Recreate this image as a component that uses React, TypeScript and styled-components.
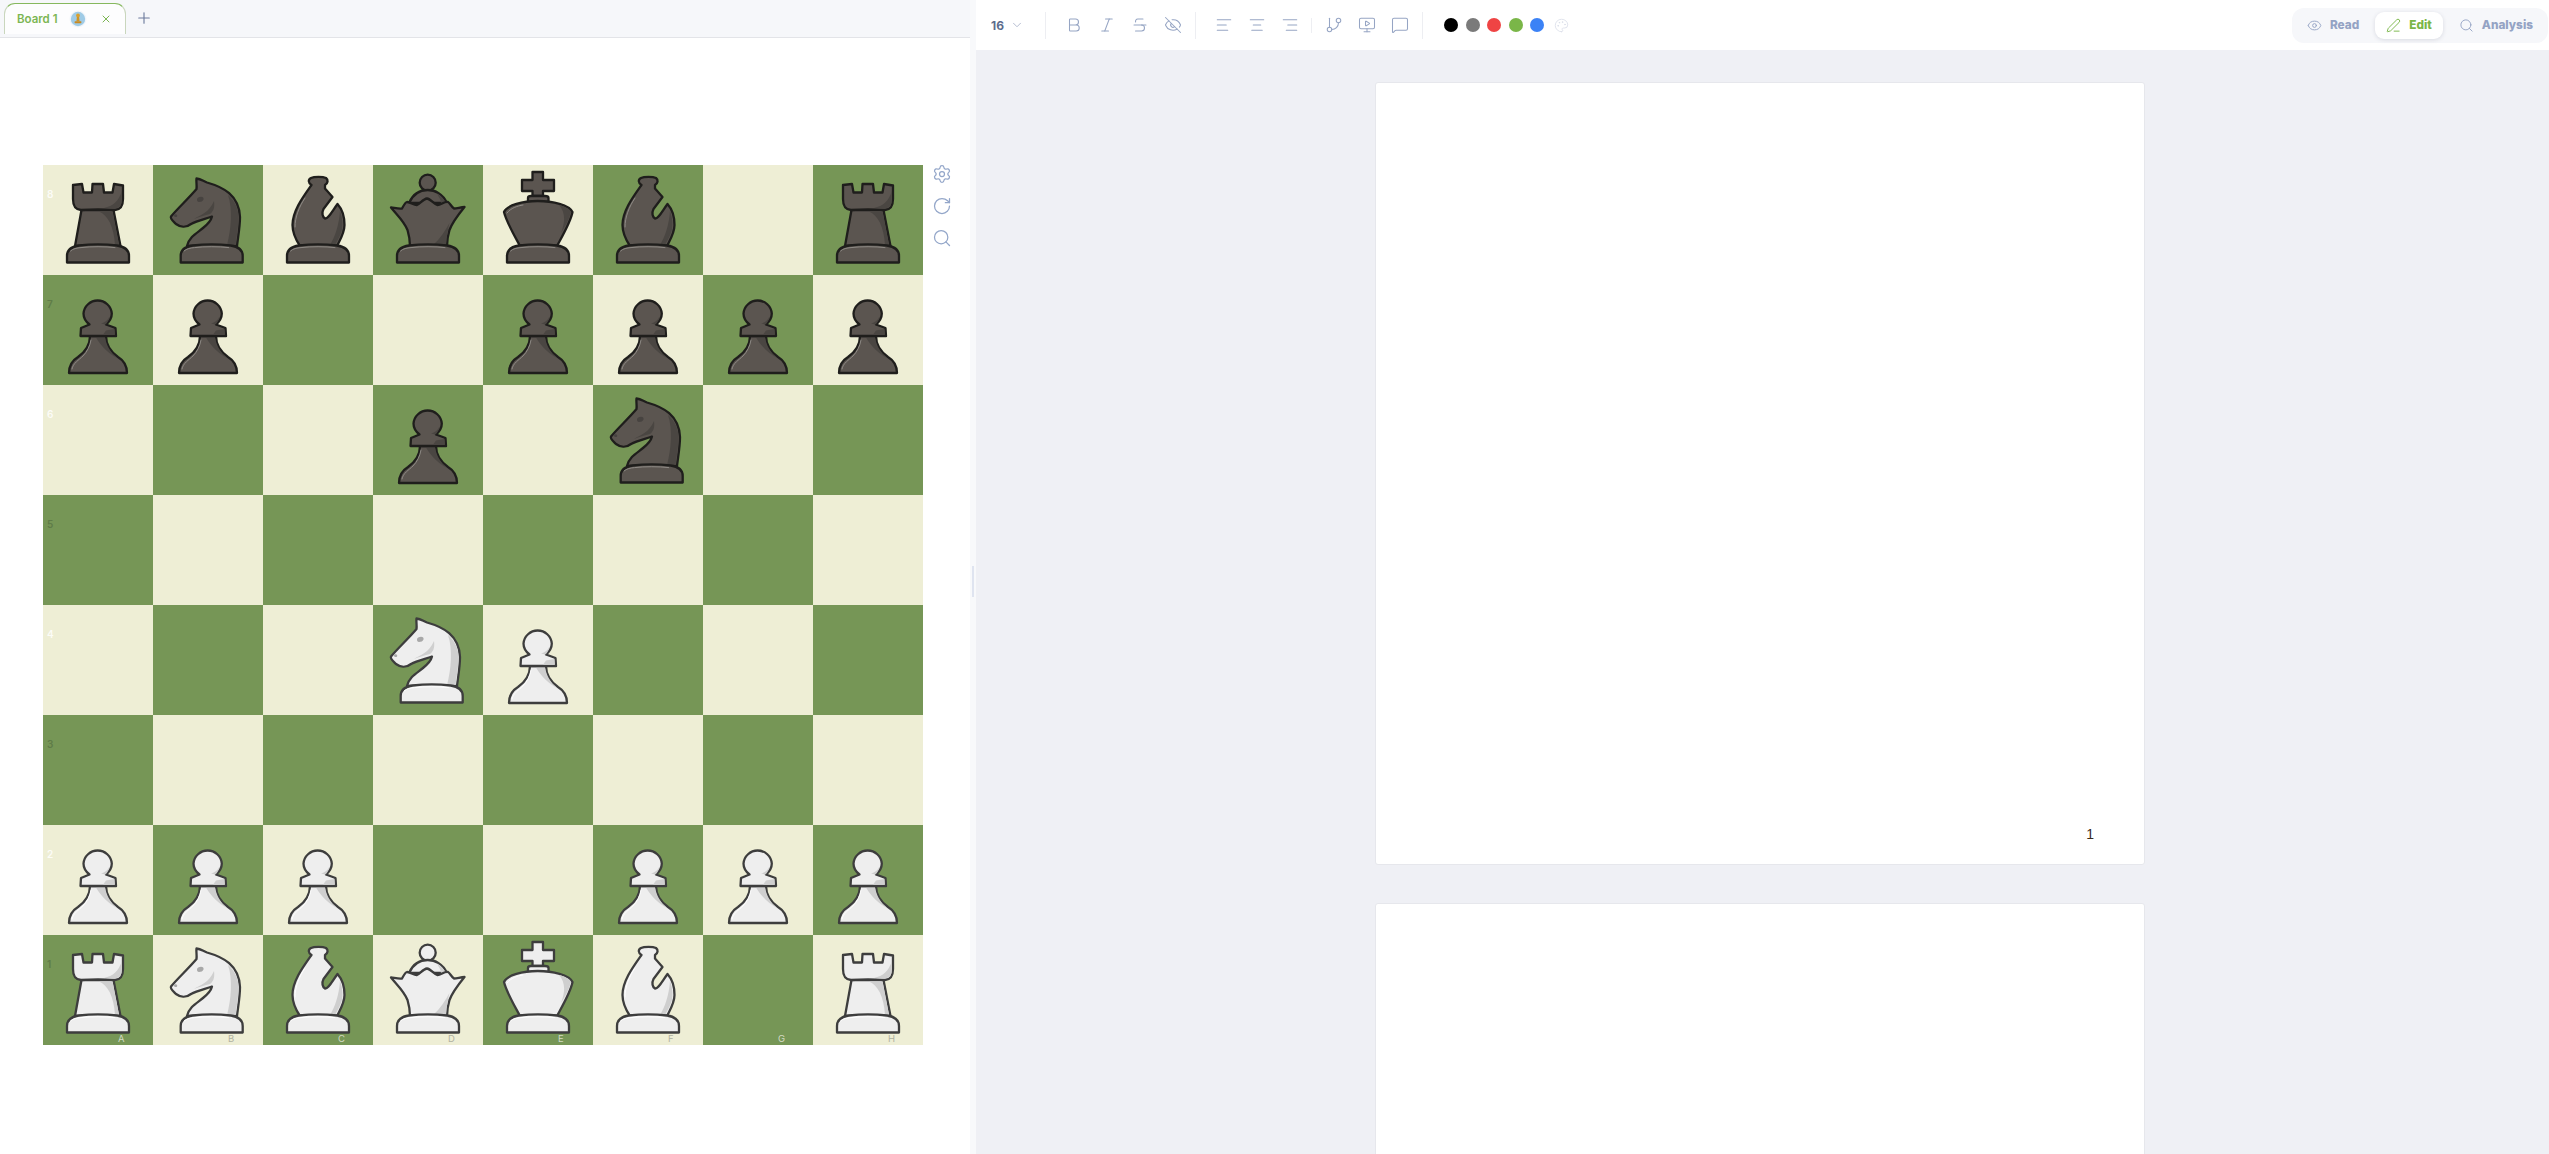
import React, { FC } from 'react'
import styled, { createGlobalStyle } from 'styled-components'
import {
  AlignCenter,
  AlignLeft,
  AlignRight,
  Bold,
  ChevronDown,
  Eye,
  EyeOff,
  GitBranch,
  Italic,
  MessageSquare,
  MonitorPlay,
  Palette,
  PenLine,
  Plus,
  RotateCw,
  Search,
  Settings,
  Strikethrough,
  X,
} from 'lucide-react'

const GlobalStyle = createGlobalStyle`
  html, body {
    margin: 0;
    padding: 0;
    height: 100%;
    overflow: hidden;
    background: #fff;
    font-family: Inter, "Liberation Sans", sans-serif;
  }
`

const Shell = styled.div`
  display: flex;
  width: 2549px;
  height: 1154px;
  overflow: hidden;
`

const LeftPane = styled.div`
  width: 970px;
  flex: none;
  display: flex;
  flex-direction: column;
  background: #fff;
`

const TabBar = styled.div`
  display: flex;
  align-items: flex-start;
  height: 38px;
  box-sizing: border-box;
  padding: 3px 0 0 4px;
  background: #f6f7fa;
  border-bottom: 1px solid #e3e4e8;
`

const Tab = styled.div`
  display: flex;
  align-items: center;
  width: 122px;
  height: 31px;
  box-sizing: border-box;
  padding: 0 0 0 12px;
  background: #fdfdfe;
  border: 1px solid #c9d6bd;
  border-top: 1px solid #86b85e;
  border-bottom: none;
  border-radius: 11px 11px 0 0;
`

const TabTitle = styled.span`
  font-size: 11.5px;
  font-weight: 600;
  color: #7cb653;
  width: 52px;
  flex: none;
`

const TabClose = styled(X)`
  margin-left: 13px;
  color: #7cb653;
`

const AddTab = styled.div`
  display: flex;
  align-items: center;
  justify-content: center;
  width: 20px;
  height: 20px;
  margin: 5px 0 0 8px;
  color: #6c7a9c;
`

const BoardRow = styled.div`
  display: flex;
  align-items: flex-start;
  padding: 127px 0 0 43px;
`

const Board = styled.div`
  display: grid;
  grid-template-columns: repeat(8, 110px);
  grid-auto-rows: 110px;
`

const Square = styled.div<{ $dark: boolean }>`
  position: relative;
  background: ${(p) => (p.$dark ? '#769656' : '#eeeed5')};

  svg {
    display: block;
  }
`

const RankLabel = styled.span<{ $dark: boolean }>`
  position: absolute;
  left: 4px;
  top: 22px;
  font-size: 10px;
  font-weight: 600;
  line-height: 14px;
  color: ${(p) => (p.$dark ? '#5f7c48' : 'rgba(255, 255, 255, 0.85)')};
`

const FileLabel = styled.span<{ $dark: boolean }>`
  position: absolute;
  left: 75px;
  top: 98px;
  font-size: 9.5px;
  line-height: 12px;
  color: ${(p) => (p.$dark ? '#d3dac4' : '#b0b1a0')};
`

const BoardTools = styled.div`
  display: flex;
  flex-direction: column;
  gap: 12px;
  margin-top: -1px;
  padding: 0 0 0 9px;
  color: #93a6c9;
`

const Divider = styled.div`
  width: 6px;
  flex: none;
  display: flex;
  align-items: center;
  justify-content: center;
  background: #f8f9fb;
  padding-top: 9px;
  box-sizing: border-box;
`

const DividerHandle = styled.div`
  width: 2px;
  height: 31px;
  background: #dfe4f0;
`

const RightPane = styled.div`
  flex: 1;
  min-width: 0;
  display: flex;
  flex-direction: column;
  background: #eff0f5;
`

const Toolbar = styled.div`
  display: flex;
  align-items: center;
  height: 50px;
  flex: none;
  background: #fff;
  padding-left: 15px;
`

const FontSize = styled.div`
  display: flex;
  align-items: center;
  width: 54px;
  gap: 6px;
  font-size: 12px;
  font-weight: 700;
  color: #5c6b8c;

  svg {
    color: #aab4ca;
  }
`

const Separator = styled.div<{ $short?: boolean; $flush?: boolean }>`
  width: 1px;
  height: ${(p) => (p.$short ? '15px' : '27px')};
  background: #edeef2;
  flex: none;
  margin: ${(p) => (p.$short ? '0 5px' : p.$flush ? '0 11px 0 0' : '0 11px 0 6px')};
`

const ToolButton = styled.div<{ $faint?: boolean; $narrow?: boolean }>`
  display: flex;
  align-items: center;
  justify-content: center;
  width: ${(p) => (p.$narrow ? '20px' : '33px')};
  height: 33px;
  flex: none;
  color: ${(p) => (p.$faint ? '#d8dde8' : '#96a5c4')};
`

const Swatches = styled.div`
  display: flex;
  align-items: center;
  gap: 7.5px;
  margin-left: 10px;
`

const Swatch = styled.div<{ $color: string }>`
  width: 14px;
  height: 14px;
  border-radius: 50%;
  background: ${(p) => p.$color};
`

const Modes = styled.div`
  display: flex;
  align-items: center;
  gap: 5px;
  height: 35px;
  box-sizing: border-box;
  padding: 4px;
  margin-left: auto;
  margin-right: 1px;
  border-radius: 12px;
  background: #f6f7fa;
`

const Mode = styled.div<{ $active?: boolean }>`
  display: flex;
  align-items: center;
  gap: 8px;
  height: 27px;
  padding: 0 11px;
  border-radius: 9px;
  font-size: 11.8px;
  font-weight: 800;
  color: ${(p) => (p.$active ? '#7ab648' : '#94a3c4')};
  background: ${(p) => (p.$active ? '#fff' : 'transparent')};
  box-shadow: ${(p) => (p.$active ? '0 1px 4px rgba(40, 50, 80, 0.14)' : 'none')};
`

const Sheets = styled.div`
  flex: 1;
  min-height: 0;
  overflow: hidden;
  display: flex;
  flex-direction: column;
  align-items: center;
  gap: 38px;
  padding: 32px 5px 0 0;
`

const Sheet = styled.div`
  width: 770px;
  height: 783px;
  flex: none;
  box-sizing: border-box;
  display: flex;
  align-items: flex-end;
  justify-content: flex-end;
  padding: 0 50px 22px 0;
  background: #fff;
  border: 1px solid #e6e7ec;
  border-radius: 3px;
`

const PageNumber = styled.span`
  font-family: 'Liberation Sans', sans-serif;
  font-size: 14px;
  line-height: 16px;
  color: #3a2a1c;
`

type Layer = { d: string; kind: 'fill' | 'shade' | 'light' | 'dot' }

const BASE = 'M24 97.5V91C24 84.5 29 81.5 36 80.5C48 79 62 79 74 80.5C81 81.5 86 84.5 86 91V97.5Z'
const BASE_LIGHT = 'M27.5 86C30 83.5 34 83 38 82.6C48 81.4 62 81.4 72 82.6'
const KNIGHT_BASE =
  'M27.7 97.5V91C27.7 84.5 32.7 81.5 39.7 80.5C51.7 79 65.7 79 77.7 80.5C84.7 81.5 89.7 84.5 89.7 91V97.5Z'
const KNIGHT_BASE_LIGHT = 'M31 86C33.7 83.5 37.7 83 41.7 82.6C51.7 81.4 65.7 81.4 75.7 82.6'

const pieces: Record<string, Layer[]> = {
  r: [
    { kind: 'fill', d: 'M38.5 45L32 81H77.5L70.5 45Z' },
    { kind: 'shade', d: 'M56 46.5C65 50 71 62 72 80H76L69.5 46.5Z' },
    {
      kind: 'fill',
      d: 'M30 20L39 19L40.5 27.5H49L49.5 19H60L61 27.5H69.5L71 19L80 20.5V34C80 41 78 44.5 72 45C60 44 50 44 38 45C32 44.5 30 41 30 34Z',
    },
    { kind: 'shade', d: 'M78.8 26V34C78.8 40 77 43 71 43.7C66 43.5 63 43.2 61 43C70 41 76 36 78.8 26Z' },
    { kind: 'fill', d: BASE },
    { kind: 'light', d: BASE_LIGHT },
  ],
  n: [
    {
      kind: 'fill',
      d: 'M43.5 13.5C48 14 50 16 54 17.5C70 22 86 30 87 52C87 62 85 72 84 81H34C36 72 44 68 50 63C55 59 58 56 59 51.5C52 54 44 55.5 38 59C33 63 27 62 23 59C20 56 17 54 18 51.5C24 44 36 33 43.5 24C44 20 43 16 43.5 13.5Z',
    },
    { kind: 'shade', d: 'M75 30C82 36 85.5 44 85.5 52C85.5 62 83.5 72 82.5 80H74C78 65 80 45 75 30Z' },
    { kind: 'shade', d: 'M61 36C62 43 60 47 57 49C52 50.5 46 51.5 41 54C47 50 56 48 61 36Z' },
    { kind: 'dot', d: 'M44 34.5C44 32.8 46 31.8 48 31.8C50 31.8 51 33 50.5 34.5C50 36.2 48 37 46 37C44.5 37 44 36 44 34.5Z' },
    { kind: 'dot', d: 'M21 50.5C21 49.5 22.5 49 23.5 49.5C24.5 50 24.5 51.5 23.5 52C22.5 52.3 21 51.8 21 50.5Z' },
    { kind: 'fill', d: KNIGHT_BASE },
    { kind: 'light', d: KNIGHT_BASE_LIGHT },
  ],
  b: [
    {
      kind: 'fill',
      d: 'M48.5 20C45 18 45 14.5 48 13C51 11.5 60 11.5 63 13C65.5 15 65 18 62 20V23.5L69.5 32L60.5 44C58.5 48 59.5 52 62 53.5C65 54 68 48 74.5 39C79 44 81.5 52 81.5 60C81.5 68 77 75 74 81H37C33 75 29.5 68 29.5 60C29.5 46 40 32 48.5 20Z',
    },
    { kind: 'shade', d: 'M77 46C80 54 80.3 62 78 68C76 73 74 76.5 72 80H67C72 72 76 60 77 46Z' },
    { kind: 'light', d: 'M32 62C32 52 36 42 42 33' },
    { kind: 'fill', d: BASE },
    { kind: 'light', d: BASE_LIGHT },
  ],
  q: [
    { kind: 'fill', d: 'M46.7 17.7a8 8 0 1 0 16 0a8 8 0 1 0-16 0Z' },
    { kind: 'fill', d: 'M36 38C40 29 47 25 54.7 25C62 25 70 29 74 38Z' },
    { kind: 'shade', d: 'M64 29C68 31 71 34 73 38H68C68 35 66 32 64 29Z' },
    {
      kind: 'fill',
      d: 'M18 42.5C22 43 26 44 29 43.5C31 40 32 37.5 34 37C38 37 41 40.5 44 40C47 39 50 34 54 33.5C58 34 61 39.5 64.5 40C68 40 71 36.5 75 37C77 38 78.5 42 81 43.5C84 43.5 88 42 91.5 42C85 50 79 58 76.5 65C75 70 74 75 74 81H37C37 75 36 70 34.5 65C31 56 24 50 18 42.5Z',
    },
    { kind: 'shade', d: 'M76.5 58C75 64 73.5 72 73 80H60C67 74 72 66 76.5 58Z' },
    { kind: 'fill', d: BASE },
    { kind: 'light', d: BASE_LIGHT },
  ],
  k: [
    { kind: 'fill', d: 'M49.5 7H60V15H71V26H60V31H49.5V26H39V15H49.5Z' },
    { kind: 'fill', d: 'M45 37V33C45 31.5 46 31 48 31H62C64 31 65.5 31.5 65.5 33V37Z' },
    {
      kind: 'fill',
      d: 'M21 47C24 40 40 36 54.7 36C70 36 86 40 89.5 47C88 56 81 68 74 81H37C30 68 23 56 21 47Z',
    },
    { kind: 'shade', d: 'M76 40C82 41.5 87 44 88 47C86 55 82 62 78 68C82 58 83 48 76 40Z' },
    { kind: 'light', d: 'M24 48C28 43 34 41 40 40' },
    { kind: 'fill', d: BASE },
    { kind: 'light', d: BASE_LIGHT },
  ],
  p: [
    {
      kind: 'fill',
      d: 'M47 61C47 70 42 77 35 82C30 85 26 89 26 98H84C84 89 80 85 75 82C68 77 63 70 63 61Z',
    },
    { kind: 'shade', d: 'M53 62.5C58 71 66 79 74 83C68 78 63.5 71 62 62.5Z' },
    { kind: 'light', d: 'M29 94C30 88 36 85 40 81C44 77 47 71 48 65' },
    {
      kind: 'fill',
      d: 'M46.5 49.5C42 46 40.5 42 40.5 38.5A14.2 14.2 0 0 1 68.8 38.5C68.8 42 67 46 63 49.5L72.5 53L73 61H37.5L38 53Z',
    },
    { kind: 'shade', d: 'M58 48.5C62 47.5 65 45 66.5 41.5C66 45 64.5 47.5 62.5 49.5Z' },
    { kind: 'shade', d: 'M63 55.5L71.3 54L71.8 59.8H60Z' },
  ],
}

const palettes = {
  black: { fill: '#5b5550', shade: '#4a4642', light: '#8f8b86', dot: '#474340', line: '#1f1e1c' },
  white: { fill: '#eeeeee', shade: '#cfcfcf', light: '#ffffff', dot: '#a8a8a8', line: '#3d3d3d' },
}

const Piece: FC<{ code: string }> = ({ code }) => {
  const isWhite = code === code.toUpperCase()
  const colors = isWhite ? palettes.white : palettes.black
  return (
    <svg width='110' height='110' viewBox='0 0 110 110'>
      {pieces[code.toLowerCase()].map((layer, i) => {
        if (layer.kind === 'fill') {
          return (
            <path
              key={i}
              d={layer.d}
              fill={colors.fill}
              stroke={colors.line}
              strokeWidth='2.3'
              strokeLinejoin='round'
            />
          )
        }
        if (layer.kind === 'light') {
          return <path key={i} d={layer.d} fill='none' stroke={colors.light} strokeWidth='1' strokeLinecap='round' />
        }
        return <path key={i} d={layer.d} fill={colors[layer.kind]} />
      })}
    </svg>
  )
}

const TabAvatar: FC = () => (
  <svg width='18' height='18' viewBox='0 0 18 18'>
    <circle cx='9' cy='9' r='8.5' fill='#f3f6fa' />
    <circle cx='9' cy='9' r='7.2' fill='#9fcbe6' />
    <circle cx='9' cy='5.4' r='1.9' fill='#d9a02f' />
    <path d='M7.9 7h2.2l.5 4.2h-3.2z' fill='#cf9528' />
    <rect x='5.6' y='11.2' width='6.8' height='2' rx='.6' fill='#c98a22' />
  </svg>
)

const rows = ['rnbqkb.r', 'pp..pppp', '...p.n..', '........', '...NP...', '........', 'PPP..PPP', 'RNBQKB.R']
const fileNames = 'ABCDEFGH'
const swatches = ['#000000', '#7a7a7a', '#ef4444', '#7ab648', '#3b82f6']

const App: FC = () => {
  return (
    <Shell>
      <GlobalStyle />
      <LeftPane>
        <TabBar>
          <Tab>
            <TabTitle>Board 1</TabTitle>
            <TabAvatar />
            <TabClose size={12} />
          </Tab>
          <AddTab>
            <Plus size={18} strokeWidth={1.5} />
          </AddTab>
        </TabBar>
        <BoardRow>
          <Board>
            {rows.map((row, r) =>
              row.split('').map((cell, f) => {
                const dark = (r + f) % 2 === 1
                return (
                  <Square key={`${r}-${f}`} $dark={dark}>
                    {cell !== '.' && <Piece code={cell} />}
                    {f === 0 && <RankLabel $dark={dark}>{8 - r}</RankLabel>}
                    {r === 7 && <FileLabel $dark={dark}>{fileNames[f]}</FileLabel>}
                  </Square>
                )
              }),
            )}
          </Board>
          <BoardTools>
            <Settings size={20} strokeWidth={1.5} />
            <RotateCw size={20} strokeWidth={1.5} />
            <Search size={20} strokeWidth={1.5} />
          </BoardTools>
        </BoardRow>
      </LeftPane>
      <Divider>
        <DividerHandle />
      </Divider>
      <RightPane>
        <Toolbar>
          <FontSize>
            16
            <ChevronDown size={14} strokeWidth={1.5} />
          </FontSize>
          <Separator $flush />
          <ToolButton>
            <Bold size={18} strokeWidth={1.4} />
          </ToolButton>
          <ToolButton>
            <Italic size={18} strokeWidth={1.4} />
          </ToolButton>
          <ToolButton>
            <Strikethrough size={18} strokeWidth={1.4} />
          </ToolButton>
          <ToolButton>
            <EyeOff size={18} strokeWidth={1.4} />
          </ToolButton>
          <Separator />
          <ToolButton>
            <AlignLeft size={18} strokeWidth={1.4} />
          </ToolButton>
          <ToolButton>
            <AlignCenter size={18} strokeWidth={1.4} />
          </ToolButton>
          <ToolButton>
            <AlignRight size={18} strokeWidth={1.4} />
          </ToolButton>
          <Separator $short />
          <ToolButton>
            <GitBranch size={18} strokeWidth={1.4} />
          </ToolButton>
          <ToolButton>
            <MonitorPlay size={18} strokeWidth={1.4} />
          </ToolButton>
          <ToolButton>
            <MessageSquare size={18} strokeWidth={1.4} />
          </ToolButton>
          <Separator />
          <Swatches>
            {swatches.map((color) => (
              <Swatch key={color} $color={color} />
            ))}
            <ToolButton $faint $narrow>
              <Palette size={15} strokeWidth={1.25} />
            </ToolButton>
          </Swatches>
          <Modes>
            <Mode>
              <Eye size={15} strokeWidth={1.5} />
              Read
            </Mode>
            <Mode $active>
              <PenLine size={15} strokeWidth={1.5} />
              Edit
            </Mode>
            <Mode>
              <Search size={15} strokeWidth={1.5} />
              Analysis
            </Mode>
          </Modes>
        </Toolbar>
        <Sheets>
          <Sheet>
            <PageNumber>1</PageNumber>
          </Sheet>
          <Sheet />
        </Sheets>
      </RightPane>
    </Shell>
  )
}

export default App
